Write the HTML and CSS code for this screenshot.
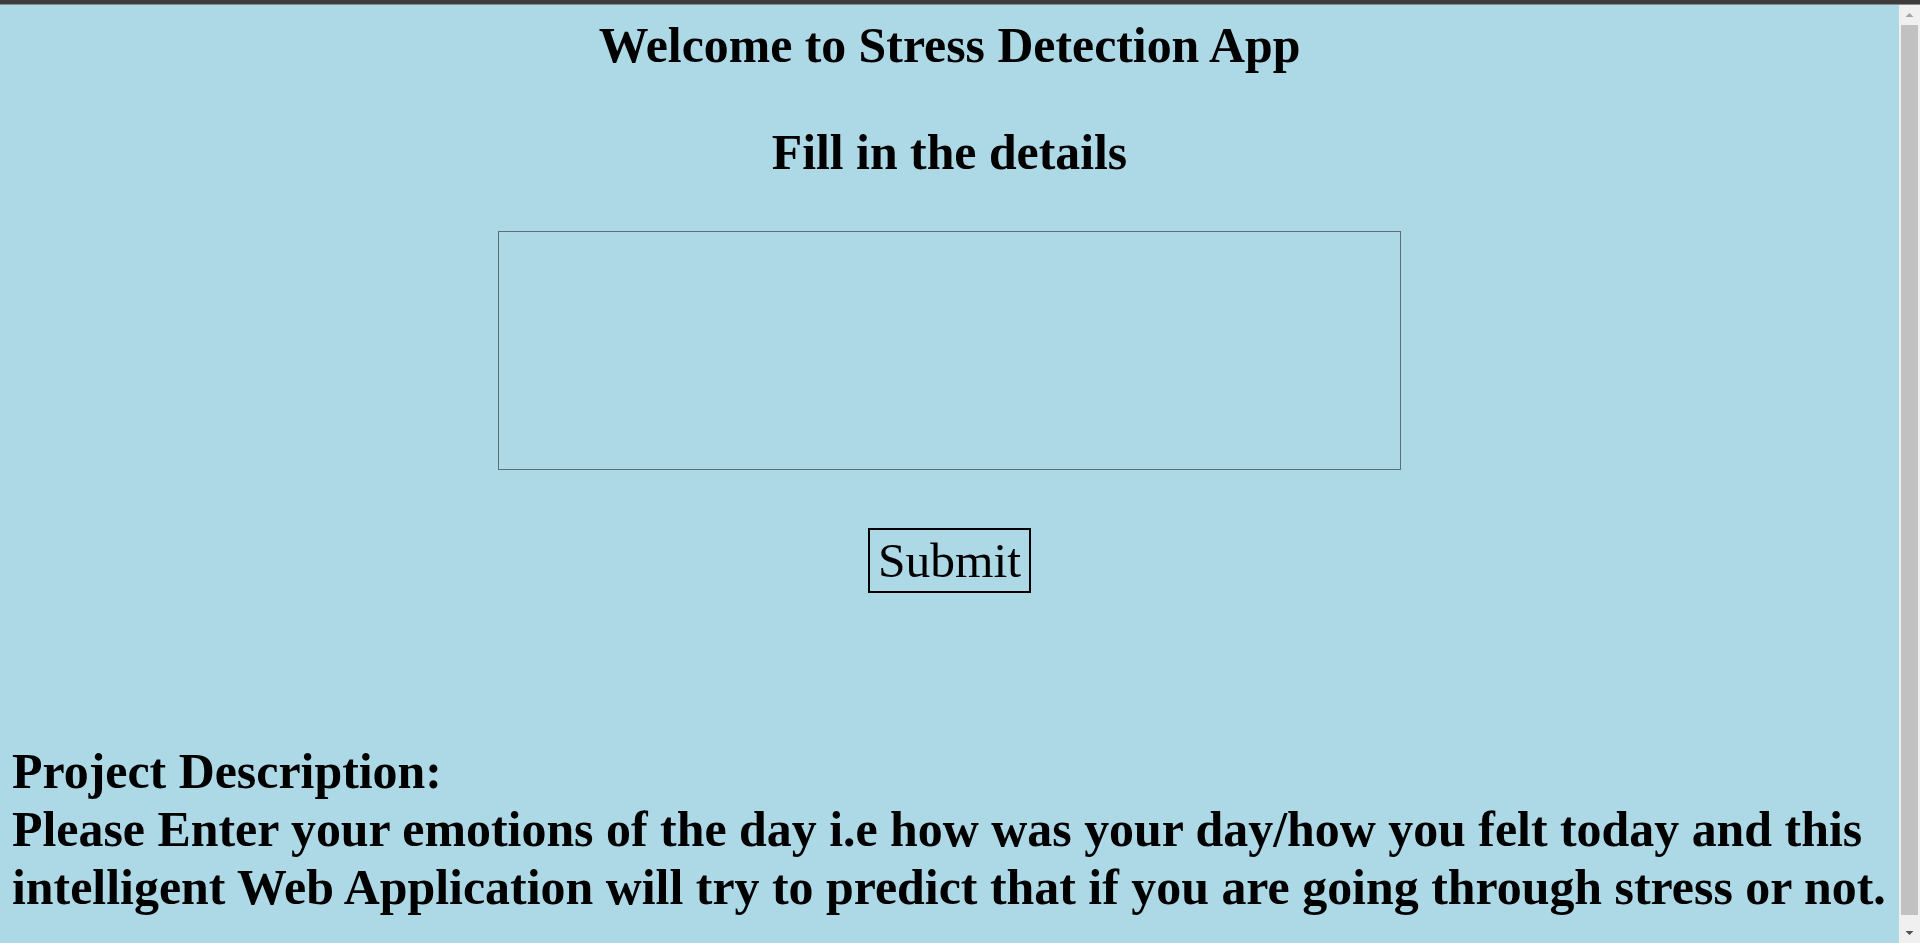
FILE: index.html
```html
<!DOCTYPE html>
<html lang="en">
<head>
<meta charset="utf-8">
<title>Stress Detection App</title>
<link rel="stylesheet" href="styles.css">
</head>
<body>
<div class="chrome-bar"></div>
<div class="window">
  <div class="viewport">
    <main class="page">
      <h1 class="title">Welcome to Stress Detection App</h1>
      <h2 class="title subtitle">Fill in the details</h2>
      <form class="form" onsubmit="return false;">
        <textarea class="entry" name="text"></textarea>
        <button class="submit" type="submit">Submit</button>
      </form>
      <section class="description">
        <h3 class="desc-head">Project Description:</h3>
        <p class="desc-text">Please Enter your emotions of the day i.e how was your day/how you felt today and this<br>intelligent Web Application will try to predict that if you are going through stress or not.</p>
      </section>
    </main>
  </div>
  <div class="scrollbar" aria-hidden="true">
    <div class="sb-btn">
      <svg width="21" height="19" viewBox="0 0 21 19"><path d="M6.5 12 L10.5 8 L14.5 12 Z" fill="#a3a3a3"/></svg>
    </div>
    <div class="sb-track"><div class="sb-thumb"></div></div>
    <div class="sb-btn">
      <svg width="21" height="19" viewBox="0 0 21 19"><path d="M6.5 7 L10.5 11 L14.5 7 Z" fill="#505050"/></svg>
    </div>
  </div>
</div>
</body>
</html>
```

FILE: styles.css
```css
html, body {
  margin: 0;
  padding: 0;
  height: 100%;
  overflow: hidden;
  background: #add8e6;
}

body {
  display: flex;
  flex-direction: column;
}

.chrome-bar {
  flex: none;
  height: 4px;
  background: #3c3c3c;
  border-bottom: 1px solid #8a8a8a;
}

.window {
  flex: 1;
  min-height: 0;
  display: flex;
}

.viewport {
  flex: 1;
  min-width: 0;
  overflow: hidden;
  background: #add8e6;
  font-family: "Liberation Serif", "Times New Roman", serif;
  color: #000;
}

.scrollbar {
  flex: none;
  width: 21px;
  display: flex;
  flex-direction: column;
  background: #f0f0f0;
}

.sb-btn {
  flex: none;
  height: 19px;
}

.sb-btn svg {
  display: block;
}

.sb-track {
  flex: 1;
  display: flex;
  padding: 1px 2px 9px;
}

.sb-thumb {
  flex: 1;
  background: #c1c1c1;
}

.page {
  padding: 12px 12px 50px;
}

.title {
  margin: 0;
  text-align: center;
  font-size: 49.8px;
  font-weight: bold;
  line-height: normal;
}

.subtitle {
  margin-top: 50px;
}

.form {
  margin: 50px 0 0;
  display: flex;
  flex-direction: column;
  align-items: center;
}

.entry {
  box-sizing: border-box;
  width: 903px;
  height: 239px;
  margin: 0;
  padding: 3px;
  border: 1px solid #5f6e74;
  background: transparent;
  resize: none;
  font-family: "Liberation Mono", monospace;
  font-size: 20px;
  outline: none;
}

.submit {
  margin-top: 58px;
  padding: 2px 8px;
  border: 2px solid #000;
  background: transparent;
  font-family: "Liberation Serif", "Times New Roman", serif;
  font-size: 49.5px;
  line-height: normal;
  color: #000;
  border-radius: 0;
}

.description {
  margin-top: 150px;
  font-size: 49.9px;
  font-weight: bold;
  line-height: 58px;
}

.desc-head,
.desc-text {
  margin: 0;
  font-size: inherit;
  font-weight: inherit;
  white-space: nowrap;
}
```
